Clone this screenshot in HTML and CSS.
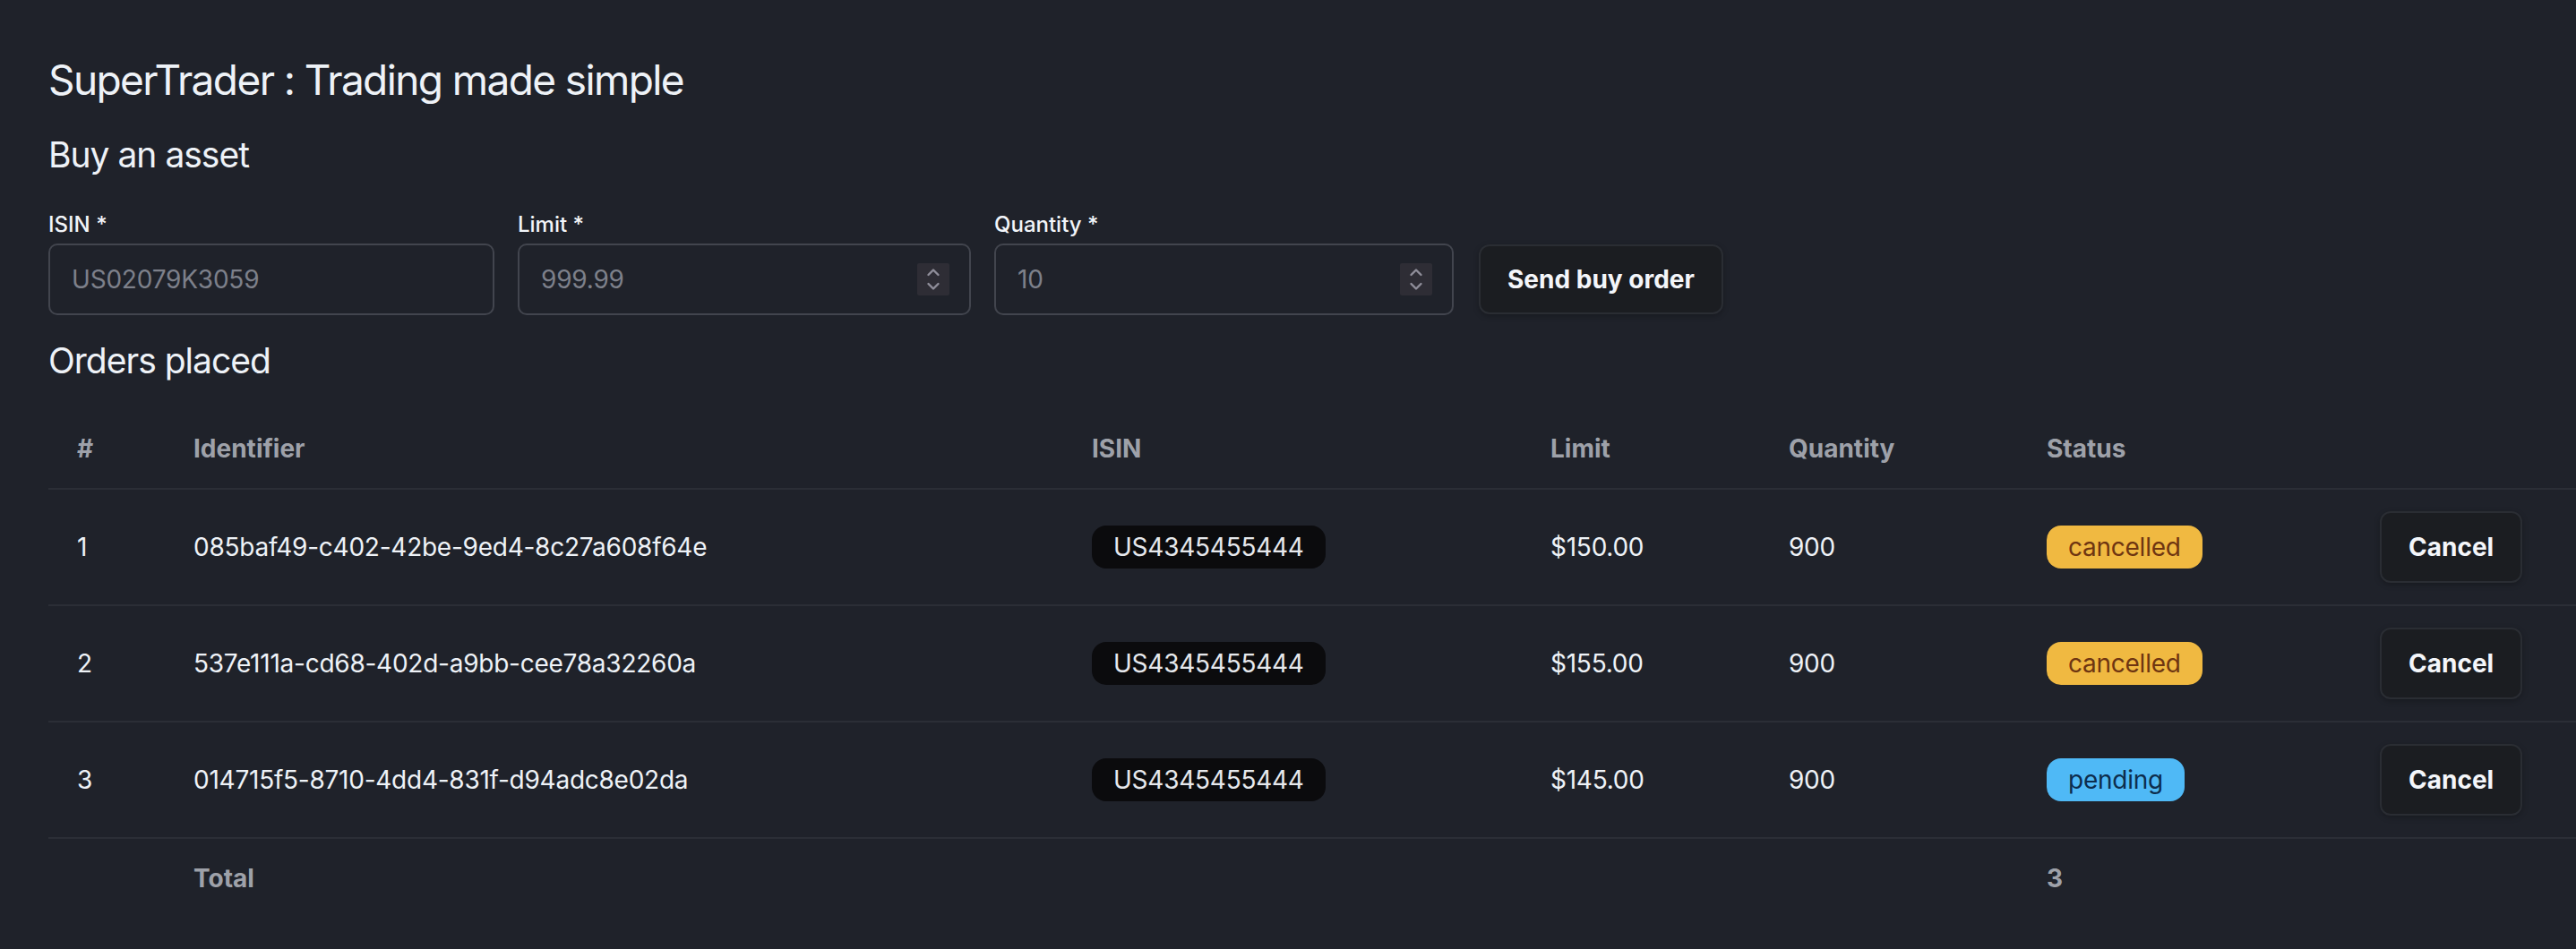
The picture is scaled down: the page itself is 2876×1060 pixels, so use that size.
FILE: index.html
```html
<!DOCTYPE html>
<html lang="en">
<head>
<meta charset="utf-8">
<title>SuperTrader</title>
<link rel="stylesheet" href="styles.css">
</head>
<body>
<main class="page">
  <h1 class="title">SuperTrader : Trading made simple</h1>
  <h2 class="section-title">Buy an asset</h2>
  <form class="buy-form">
    <label class="field field-isin">
      <span class="field-label">ISIN *</span>
      <span class="field-box">
        <input class="field-input" type="text" placeholder="US02079K3059">
      </span>
    </label>
    <label class="field field-limit">
      <span class="field-label">Limit *</span>
      <span class="field-box">
        <input class="field-input" type="number" placeholder="999.99">
        <span class="spinner" aria-hidden="true">
          <svg width="36" height="36" viewBox="0 0 36 36"><polyline points="12.5,13 18,7.5 23.5,13"/><polyline points="12.5,23 18,28.5 23.5,23"/></svg>
        </span>
      </span>
    </label>
    <label class="field field-qty">
      <span class="field-label">Quantity *</span>
      <span class="field-box">
        <input class="field-input" type="number" placeholder="10">
        <span class="spinner" aria-hidden="true">
          <svg width="36" height="36" viewBox="0 0 36 36"><polyline points="12.5,13 18,7.5 23.5,13"/><polyline points="12.5,23 18,28.5 23.5,23"/></svg>
        </span>
      </span>
    </label>
    <button class="btn btn-send" type="button">Send buy order</button>
  </form>

  <h2 class="section-title orders-title">Orders placed</h2>
  <table class="orders">
    <colgroup>
      <col class="col-num"><col class="col-id"><col class="col-isin"><col class="col-limit"><col class="col-qty"><col class="col-status"><col class="col-action">
    </colgroup>
    <thead>
      <tr><th>#</th><th>Identifier</th><th>ISIN</th><th>Limit</th><th>Quantity</th><th>Status</th><th></th></tr>
    </thead>
    <tbody>
      <tr>
        <td>1</td><td>085baf49-c402-42be-9ed4-8c27a608f64e</td>
        <td><span class="badge badge-isin">US4345455444</span></td>
        <td>$150.00</td><td>900</td>
        <td><span class="badge badge-cancelled">cancelled</span></td>
        <td><button class="btn" type="button">Cancel</button></td>
      </tr>
      <tr>
        <td>2</td><td>537e111a-cd68-402d-a9bb-cee78a32260a</td>
        <td><span class="badge badge-isin">US4345455444</span></td>
        <td>$155.00</td><td>900</td>
        <td><span class="badge badge-cancelled">cancelled</span></td>
        <td><button class="btn" type="button">Cancel</button></td>
      </tr>
      <tr>
        <td>3</td><td>014715f5-8710-4dd4-831f-d94adc8e02da</td>
        <td><span class="badge badge-isin">US4345455444</span></td>
        <td>$145.00</td><td>900</td>
        <td><span class="badge badge-pending">pending</span></td>
        <td><button class="btn" type="button">Cancel</button></td>
      </tr>
    </tbody>
    <tfoot>
      <tr><td></td><td>Total</td><td></td><td></td><td></td><td>3</td><td></td></tr>
    </tfoot>
  </table>
</main>
</body>
</html>
```

FILE: styles.css
```css
* { box-sizing: border-box; }

html, body {
  margin: 0;
  background: #1f222a;
}

body {
  font-family: Inter, "Noto Sans", "Liberation Sans", sans-serif;
  color: #eef2f7;
  overflow: hidden;
}

.page {
  padding: 57px 0 0 54px;
}

.title {
  margin: 0 0 24px;
  font-size: 46px;
  line-height: 64px;
  font-weight: 400;
  letter-spacing: -1.6px;
}

.section-title {
  margin: 0;
  font-size: 39px;
  line-height: 56px;
  font-weight: 400;
  letter-spacing: -1px;
}

.buy-form {
  display: flex;
  align-items: flex-end;
  gap: 26px;
  margin-top: 34px;
}

.field {
  display: flex;
  flex-direction: column;
  gap: 5px;
}

.field-isin { width: 498px; }
.field-limit { width: 506px; }
.field-qty { width: 513px; }

.field-label {
  font-size: 24px;
  line-height: 32px;
  font-weight: 500;
  color: #f2f5f9;
}

.field-box {
  display: flex;
  align-items: center;
  height: 80px;
  padding: 0 22px 0 24px;
  border: 2px solid #42454e;
  border-radius: 10px;
  background: #1f222a;
}

.field-input {
  flex: 1;
  min-width: 0;
  border: none;
  outline: none;
  background: transparent;
  padding: 0;
  font-family: inherit;
  font-size: 28px;
  letter-spacing: -0.2px;
  color: #eef2f7;
  -moz-appearance: textfield;
  appearance: textfield;
}

.field-input::placeholder {
  color: #7d808a;
}

.field-input::-webkit-outer-spin-button,
.field-input::-webkit-inner-spin-button {
  -webkit-appearance: none;
  margin: 0;
}

.spinner {
  display: block;
  width: 36px;
  height: 36px;
  background: #2e2d35;
  border-radius: 2px;
}

.spinner svg {
  display: block;
  fill: none;
  stroke: #8f8e9a;
  stroke-width: 2.4;
  stroke-linecap: round;
  stroke-linejoin: round;
}

.btn {
  display: inline-flex;
  align-items: center;
  justify-content: center;
  height: 80px;
  padding: 0 30px;
  border: 2px solid #2a2d33;
  border-radius: 12px;
  background: #1b1d21;
  color: #f4f6fa;
  font-family: inherit;
  font-size: 28px;
  font-weight: 700;
  box-shadow: 0 2px 6px rgba(0, 0, 0, 0.25);
  cursor: pointer;
}

.btn-send {
  height: 78px;
  margin-left: 2px;
  margin-bottom: 1px;
}

.orders-title {
  margin-top: 23px;
}

.orders {
  width: 100%;
  margin-top: 26px;
  border-collapse: collapse;
  table-layout: fixed;
}

.col-num { width: 130px; }
.col-id { width: 1003px; }
.col-isin { width: 512px; }
.col-limit { width: 266px; }
.col-qty { width: 288px; }
.col-status { width: 372px; }

.orders th,
.orders td {
  padding: 24px 32px;
  text-align: left;
  font-size: 28px;
  line-height: 40px;
  white-space: nowrap;
  vertical-align: middle;
}

.orders th {
  font-weight: 700;
  color: #9ea1a9;
}

.orders thead tr,
.orders tbody tr {
  border-bottom: 2px solid #2b2e36;
}

.orders td {
  font-weight: 400;
  color: #eef2f7;
  letter-spacing: -0.25px;
}

.orders tfoot td {
  font-weight: 700;
  color: #9ea1a9;
  letter-spacing: 0;
}

.badge {
  display: inline-block;
  height: 48px;
  line-height: 48px;
  padding: 0 24px;
  border-radius: 16px;
  font-size: 28px;
  vertical-align: middle;
}

.badge-isin {
  background: #0b0b0d;
  color: #e6e8ec;
}

.badge-cancelled {
  background: #f0b941;
  color: #6e3511;
}

.badge-pending {
  background: #4fb9f6;
  color: #0d2d4d;
}
```
